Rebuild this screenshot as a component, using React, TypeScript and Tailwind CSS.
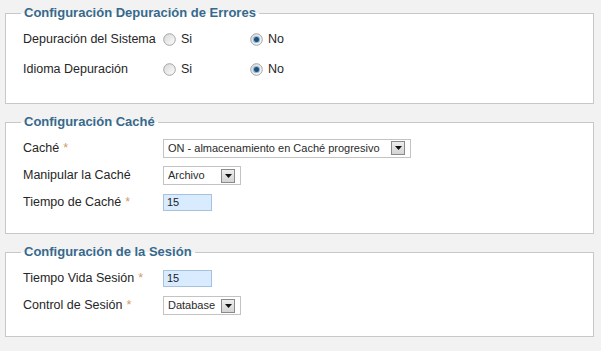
import React from 'react';

function Radio({ checked }: { checked?: boolean }) {
  return (
    <svg width="13" height="13" viewBox="0 0 13 13" className="shrink-0">
      <defs>
        <linearGradient id={checked ? 'rg-on' : 'rg-off'} x1="0" y1="0" x2="1" y2="1">
          <stop offset="0" stopColor="#d6d6d6" />
          <stop offset="1" stopColor="#ffffff" />
        </linearGradient>
      </defs>
      <circle cx="6.5" cy="6.5" r="5.8" fill={`url(#${checked ? 'rg-on' : 'rg-off'})`} stroke="#a4a4a4" strokeWidth="1" />
      {checked && (
        <>
          <circle cx="6.5" cy="6.5" r="3.6" fill="#8fb8d8" />
          <circle cx="6.5" cy="6.5" r="2.5" fill="#1f4f7a" />
        </>
      )}
    </svg>
  );
}

function Select({ value, width }: { value: string; width: string }) {
  return (
    <div className={`${width} h-[19px] flex items-center bg-white border border-[#c3c3c3] pl-[4px] pr-[5px]`}>
      <span className="flex-1 text-[11px] text-[#2a2a2a] leading-none whitespace-nowrap">{value}</span>
      <div className="w-[14px] h-[14px] border border-[#8a8a8a] bg-gradient-to-b from-[#eeeeee] to-[#d4d4d4] flex items-center justify-center">
        <svg width="7" height="4" viewBox="0 0 7 4">
          <path d="M0 0 H7 L3.5 4 Z" fill="#111" />
        </svg>
      </div>
    </div>
  );
}

function TextInput({ value }: { value: string }) {
  return (
    <div className="w-[49px] h-[17px] bg-[#d8ebff] border border-[#a7c3db] pl-[3px] flex items-center text-[11px] text-[#222] leading-none">
      {value}
    </div>
  );
}

function Req() {
  return <span className="text-[#d09a6a] ml-[4px]">*</span>;
}

function Row({ label, req, h, children }: { label: string; req?: boolean; h: string; children: React.ReactNode }) {
  return (
    <div className={`flex items-center ${h}`}>
      <div className="w-[142px] shrink-0 pl-[2px]">
        {label}
        {req && <Req />}
      </div>
      {children}
    </div>
  );
}

function RadioGroup() {
  return (
    <div className="flex items-center">
      <div className="w-[87px] flex items-center gap-[5px]">
        <Radio />
        <span>Si</span>
      </div>
      <div className="flex items-center gap-[5px]">
        <Radio checked />
        <span>No</span>
      </div>
    </div>
  );
}

function Box({ title, className, children }: { title: string; className: string; children: React.ReactNode }) {
  return (
    <fieldset className={`border border-[#c8c8c8] bg-white px-[15px] ${className}`}>
      <legend className="px-[3px] text-[13px] leading-[16px] font-bold text-[#37698c]">{title}</legend>
      {children}
    </fieldset>
  );
}

export default function App() {
  return (
    <div
      className="min-h-[351px] bg-[#f2f2f2] pl-[5px] pr-[7px] pt-[5px] flex flex-col gap-[10px] text-[12.5px] text-[#262626]"
      style={{ fontFamily: '"Liberation Sans", Arial, sans-serif' }}
    >
      <Box title="Configuración Depuración de Errores" className="pt-[3px] pb-[19px]">
        <Row label="Depuración del Sistema" h="h-[30px]">
          <RadioGroup />
        </Row>
        <Row label="Idioma Depuración" h="h-[30px]">
          <RadioGroup />
        </Row>
      </Box>

      <Box title="Configuración Caché" className="pt-[4px] pb-[18px]">
        <Row label="Caché" req h="h-[28px]">
          <Select value="ON - almacenamiento en Caché progresivo" width="w-[248px]" />
        </Row>
        <Row label="Manipular la Caché" h="h-[27px]">
          <Select value="Archivo" width="w-[78px]" />
        </Row>
        <Row label="Tiempo de Caché" req h="h-[26px]">
          <TextInput value="15" />
        </Row>
      </Box>

      <Box title="Configuración de la Sesión" className="pt-[5px] pb-[17px]">
        <Row label="Tiempo Vida Sesión" req h="h-[27px]">
          <TextInput value="15" />
        </Row>
        <Row label="Control de Sesión" req h="h-[27px]">
          <Select value="Database" width="w-[78px]" />
        </Row>
      </Box>
    </div>
  );
}
